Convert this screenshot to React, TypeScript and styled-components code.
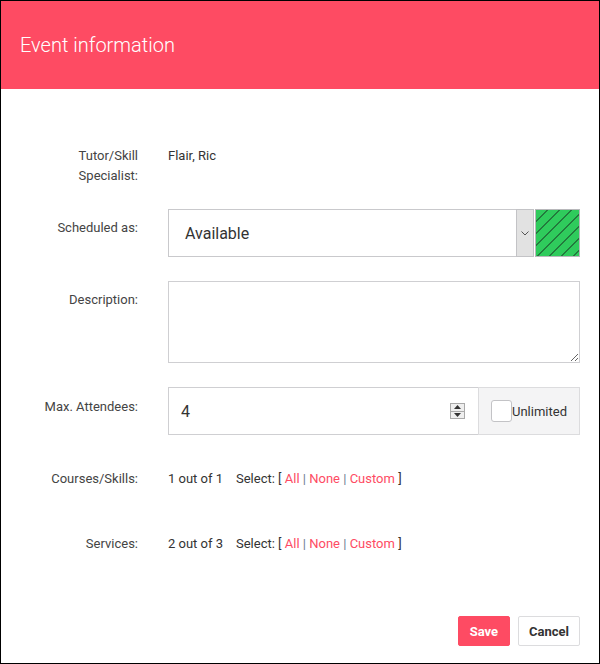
import React from 'react';
import styled, { createGlobalStyle } from 'styled-components';

const GlobalStyle = createGlobalStyle`
  html, body { margin:0; padding:0; background:#fff; }
  body { font-family: Roboto, "Liberation Sans", sans-serif; }
  * { box-sizing:border-box; }
`;

const Dialog = styled.div`
  width:600px;
  height:664px;
  border:1px solid #000;
  display:flex;
  flex-direction:column;
  background:#fff;
`;

const Header = styled.div`
  height:88px;
  background:#fe4b63;
  display:flex;
  align-items:center;
  padding:0 19px 0;
  h1 { margin:0; font:300 20px/24px Roboto, sans-serif; color:#fff; }
`;

const Body = styled.div`
  padding:57px 19px 0 0;
  display:flex;
  flex-direction:column;
  gap:24px;
`;

const Row = styled.div<{ tight?: boolean }>`
  display:flex;
  align-items:flex-start;
  margin-bottom:${({ tight }) => (tight ? -1 : 0)}px;
`;

const Label = styled.div<{ pad?: number }>`
  width:137px;
  flex:0 0 137px;
  text-align:right;
  font:13px/20px Roboto, sans-serif;
  color:#444;
  padding-top:${({ pad }) => pad ?? 9}px;
`;

const Value = styled.div`
  margin-left:30px;
  flex:1;
  min-width:0;
  display:flex;
`;

const PlainText = styled.div<{ pad?: number; bottom?: number }>`
  font:13px/20px Roboto, sans-serif;
  color:#333;
  padding-top:${({ pad }) => pad ?? 0}px;
  padding-bottom:${({ bottom }) => bottom ?? 0}px;
  white-space:pre;
`;

const SelectBox = styled.div`
  flex:1;
  height:48px;
  border:1px solid #c9c9cc;
  display:flex;
  align-items:center;
  padding-left:16px;
  font:16px Roboto, sans-serif;
  color:#333;
`;

const ArrowButton = styled.div`
  width:18px;
  height:48px;
  margin-left:-1px;
  background:#e2e2e2;
  border:1px solid #c3c3c6;
  display:flex;
  align-items:center;
  justify-content:center;
`;

const Swatch = styled.div<{ color: string }>`
  width:45px;
  height:48px;
  margin-left:1px;
  border:1px solid #b8b8bb;
  background:
    repeating-linear-gradient(135deg, ${({ color }) => color} 0 7.5px, #237a3d 7.5px 8.5px);
`;

const TextArea = styled.textarea`
  flex:1;
  height:82px;
  border:1px solid #cfcfd2;
  resize:vertical;
  font:14px Roboto, sans-serif;
  outline:none;
`;

const NumberField = styled.div`
  flex:1;
  height:48px;
  border:1px solid #cfcfd2;
  display:flex;
  align-items:center;
  padding:0 13px 0 12px;
  input {
    flex:1;
    min-width:0;
    border:none;
    outline:none;
    font:16px Roboto, sans-serif;
    color:#333;
    padding:0;
  }
`;

const Spinner = styled.div`
  width:15px;
  height:16px;
  border:1px solid #a9a9a9;
  background:#efefef;
  display:flex;
  flex-direction:column;
  span {
    flex:1;
    display:flex;
    align-items:center;
    justify-content:center;
  }
  span + span { border-top:1px solid #a9a9a9; }
`;

const Addon = styled.div`
  width:102px;
  height:48px;
  margin-left:-1px;
  border:1px solid #dcdcde;
  background:#f4f4f5;
  display:flex;
  align-items:center;
  padding-left:12px;
  font:13px Roboto, sans-serif;
  color:#333;
`;

const CheckBox = styled.span`
  width:21px;
  height:22px;
  border:1px solid #c3c3c6;
  border-radius:3px;
  background:#fff;
  display:inline-block;
`;

const Link = styled.span`
  color:#fe4b63;
`;

const Pipe = styled.span`
  color:#6b7b93;
`;

const Footer = styled.div`
  margin-top:auto;
  padding:0 19px 17px 0;
  display:flex;
  justify-content:flex-end;
  gap:8px;
`;

const Button = styled.button<{ primary?: boolean }>`
  height:30px;
  padding:0 ${({ primary }) => (primary ? 11 : 10)}px;
  border-radius:2px;
  border:1px solid ${({ primary }) => (primary ? '#fe4b63' : '#dcdcde')};
  background:${({ primary }) => (primary ? '#fe4b63' : '#fff')};
  color:${({ primary }) => (primary ? '#fff' : '#333')};
  font:700 13px Roboto, sans-serif;
`;

const SelectLinks: React.FC<{ count: string }> = ({ count }) => (
  <PlainText pad={10} bottom={11}>
    {count}{'    '}Select: [ <Link>All</Link> <Pipe>|</Pipe> <Link>None</Link> <Pipe>|</Pipe> <Link>Custom</Link> ]
  </PlainText>
);

const App: React.FC = () => {
  return (
    <Dialog>
      <GlobalStyle />
      <Header>
        <h1>Event information</h1>
      </Header>
      <Body>
        <Row tight>
          <Label pad={0}>Tutor/Skill<br />Specialist:</Label>
          <Value>
            <PlainText pad={0} bottom={18}>Flair, Ric</PlainText>
          </Value>
        </Row>
        <Row>
          <Label>Scheduled as:</Label>
          <Value>
            <SelectBox>Available</SelectBox>
            <ArrowButton>
              <svg width="8" height="5" viewBox="0 0 8 5">
                <path d="M0.5 0.5 L4 4 L7.5 0.5" fill="none" stroke="#555" strokeWidth="1" />
              </svg>
            </ArrowButton>
            <Swatch color="#2fcb5c" />
          </Value>
        </Row>
        <Row>
          <Label>Description:</Label>
          <Value>
            <TextArea />
          </Value>
        </Row>
        <Row>
          <Label pad={10}>Max. Attendees:</Label>
          <Value>
            <NumberField>
              <input type="text" defaultValue="4" />
              <Spinner>
                <span>
                  <svg width="7" height="4" viewBox="0 0 7 4"><path d="M0 4 L3.5 0 L7 4 Z" fill="#333" /></svg>
                </span>
                <span>
                  <svg width="7" height="4" viewBox="0 0 7 4"><path d="M0 0 L3.5 4 L7 0 Z" fill="#333" /></svg>
                </span>
              </Spinner>
            </NumberField>
            <Addon>
              <CheckBox />
              Unlimited
            </Addon>
          </Value>
        </Row>
        <Row>
          <Label pad={10}>Courses/Skills:</Label>
          <Value>
            <SelectLinks count="1 out of 1" />
          </Value>
        </Row>
        <Row>
          <Label pad={10}>Services:</Label>
          <Value>
            <SelectLinks count="2 out of 3" />
          </Value>
        </Row>
      </Body>
      <Footer>
        <Button primary>Save</Button>
        <Button>Cancel</Button>
      </Footer>
    </Dialog>
  );
};

export default App;
